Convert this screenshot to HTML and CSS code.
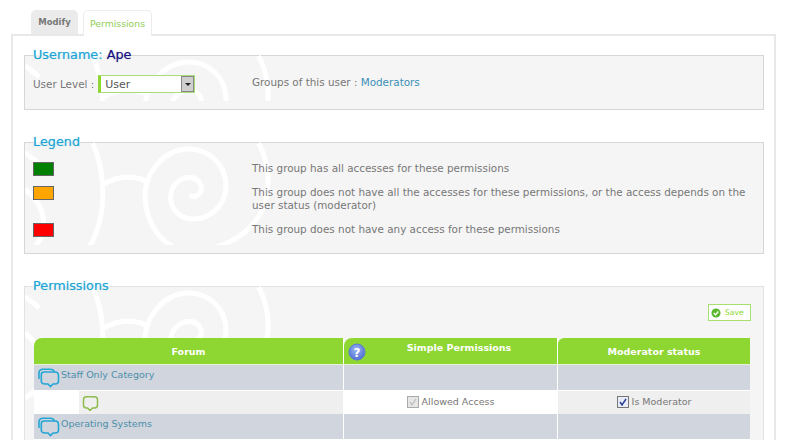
FILE: index.html
```html
<!DOCTYPE html>
<html lang="en">
<head>
<meta charset="utf-8">
<title>Permissions</title>
<link rel="stylesheet" href="styles.css">
</head>
<body>
<svg class="defs" width="0" height="0">
  <defs>
    <g id="swirl" fill="none" stroke="#fff" stroke-width="15" transform="scale(.3333) translate(-72 -36)">
      <path d="M772 42C800 90 815 170 785 240C745 325 650 368 565 365C490 362 435 290 432 205C430 130 490 62 560 60C625 58 675 110 675 170C675 230 625 272 575 270C525 268 500 225 512 185C524 150 570 130 595 160C612 185 590 210 565 200"/>
      <path d="M275 42C305 110 315 200 295 280C285 320 270 350 250 375"/>
      <path d="M310 165C350 140 395 140 435 155"/>
      <path d="M72 180C115 215 135 260 125 310C118 340 100 360 72 375"/>
      <path d="M72 70L115 105"/>
    </g>
    <g id="bubble" fill="none" stroke="currentColor" stroke-width="1.500">
      <path d="M4 .8H12C14 .8 15 1.800 15 3.800V9C15 11 14 12 12 12H10L7.500 14.500L5 12H4C2 12 1 11 1 9V3.800C1 1.800 2 .8 4 .8Z"/>
    </g>
    <g id="bubbles" fill="none" stroke="#23a7d6" stroke-width="1.600">
      <path d="M2 11V5C2 2.600 3.500 1.200 6 1.200H13C15.500 1.200 17 2.300 17.300 4"/>
      <path d="M7 4H18C20.500 4 21.500 5.300 21.500 7.500V13C21.500 15 20.300 16 18 16H16L13.500 18.500L11 16H8C5.500 16 4.300 15 4.300 13V6.500C4.300 5 5.200 4 7 4Z"/>
    </g>
  </defs>
</svg>
<div class="page">
  <nav class="tabs">
    <a class="tab tab-off">Modify</a>
    <a class="tab tab-on">Permissions</a>
  </nav>
  <main class="panel">
    <fieldset class="box box-user">
      <legend>Username: <span class="name">Ape</span></legend>
      <svg class="deco" width="740" height="300"><use href="#swirl"/></svg>
      <div class="two-col user-row">
        <div class="col-left level">
          <span>User Level :</span>
          <span class="select"><span class="select-text">User</span><span class="select-btn"><span class="caret"></span></span></span>
        </div>
        <div class="col-right">Groups of this user : <a class="link">Moderators</a></div>
      </div>
    </fieldset>

    <fieldset class="box box-legend">
      <legend>Legend</legend>
      <svg class="deco" width="740" height="300"><use href="#swirl"/></svg>
      <div class="two-col row-a">
        <div class="col-left"><span class="swatch green"></span></div>
        <div class="col-right">This group has all accesses for these permissions</div>
      </div>
      <div class="two-col row-b">
        <div class="col-left"><span class="swatch orange"></span></div>
        <div class="col-right">This group does not have all the accesses for these permissions, or the access depends on the user status (moderator)</div>
      </div>
      <div class="two-col row-c">
        <div class="col-left"><span class="swatch red"></span></div>
        <div class="col-right">This group does not have any access for these permissions</div>
      </div>
    </fieldset>

    <fieldset class="box box-perm">
      <legend>Permissions</legend>
      <svg class="deco" width="740" height="300"><use href="#swirl"/></svg>
      <div class="actions">
        <a class="save">
          <svg width="10" height="10" viewBox="0 0 11 11"><circle cx="5.500" cy="5.500" r="5" fill="#5cb82e"/><path d="M3 5.600L5 7.500L8 3.800" fill="none" stroke="#fff" stroke-width="1.500"/></svg>
          <span>Save</span>
        </a>
      </div>
      <table class="grid">
        <colgroup><col class="c1"><col class="c2"><col class="c3"></colgroup>
        <thead>
          <tr>
            <th>Forum</th>
            <th class="th-simple">
              <svg class="help" width="18" height="18" viewBox="0 0 18 18"><defs><radialGradient id="hg" cx=".45" cy=".35" r=".75"><stop offset="0" stop-color="#9bb4f2"/><stop offset="1" stop-color="#4565cc"/></radialGradient></defs><circle cx="9" cy="9" r="8" fill="url(#hg)" stroke="#5b7bd6"/><text x="9" y="13.500" text-anchor="middle" class="help-q">?</text></svg>
              <span>Simple Permissions</span>
            </th>
            <th>Moderator status</th>
          </tr>
        </thead>
        <tbody>
          <tr class="cat">
            <td><span class="cat-cell"><svg width="23" height="20" viewBox="0 0 23 20"><use href="#bubbles"/></svg><a class="cat-link">Staff Only Category</a></span></td>
            <td></td><td></td>
          </tr>
          <tr class="forum">
            <td class="f-name"><div class="f-inner"><svg class="f-icon" width="17" height="15" viewBox="0 0 16 15"><use href="#bubble"/></svg></div></td>
            <td class="f-mid"><label class="chk"><svg width="12" height="12" viewBox="0 0 12 12"><rect x=".5" y=".5" width="11" height="11" fill="#e6e6e6" stroke="#aaa"/><path d="M3 6L5 9L9 3" fill="none" stroke="#bbb" stroke-width="1.200"/></svg>Allowed Access</label></td>
            <td class="f-end"><label class="chk"><svg width="12" height="12" viewBox="0 0 12 12"><rect x=".5" y=".5" width="11" height="11" fill="#e8ecf6" stroke="#777"/><path d="M3 6L5 9L9 3" fill="none" stroke="#2a3f9a" stroke-width="1.500"/></svg>Is Moderator</label></td>
          </tr>
          <tr class="cat">
            <td><span class="cat-cell"><svg width="23" height="20" viewBox="0 0 23 20"><use href="#bubbles"/></svg><a class="cat-link">Operating Systems</a></span></td>
            <td></td><td></td>
          </tr>
        </tbody>
      </table>
    </fieldset>
  </main>
</div>
</body>
</html>
```
FILE: styles.css
```css
html, body {
  margin: 0;
  height: 440px;
  overflow: hidden;
  background: #fff;
}
body {
  font-family: "DejaVu Sans", Verdana, sans-serif;
  font-size: 10.4px;
  color: #777;
}
.defs { position: absolute; }
.page { padding: 10px 0 0 11px; width: 765px; }

.tabs { display: flex; gap: 5px; padding-left: 20px; height: 24px; position: relative; z-index: 1; }
.tab {
  display: flex;
  align-items: center;
  justify-content: center;
  border-radius: 5px 5px 0 0;
  box-sizing: border-box;
  flex: none;
}
.tab-off { width: 47px; height: 24px; background: #ebebeb; color: #777; font-size: 8.500px; font-weight: bold; }
.tab-on {
  width: 69px;
  height: 26px;
  background: #fff;
  color: #8fce55;
  border: 1px solid #ececec;
  border-bottom: 0;
  font-size: 9.300px;
}

.panel {
  border: 2px solid #e8e8e8;
  border-bottom: 0;
  padding: 0 10px 0 11px;
  height: 406px;
  box-sizing: border-box;
  overflow: hidden;
}

.box {
  position: relative;
  margin: 0;
  padding: 0;
  border: 1px solid #d6d6d6;
  background: #f5f5f5;
  min-width: 0;
}
.box legend {
  position: relative;
  z-index: 1;
  margin-left: 8px;
  padding: 0;
  font-size: 12.800px;
  line-height: 14px;
  color: #1da5d6;
  text-shadow: 0 0 1px rgba(29, 165, 214, .5);
}
.name { color: #16127f; text-shadow: 0 0 1px rgba(22, 18, 127, .5); }
.deco { position: absolute; left: 0; top: -8px; width: 100%; height: 100%; }

.box-user { margin-top: 12px; height: 60px; }
.box-legend { margin-top: 25px; height: 117px; }
.box-perm { margin-top: 25px; height: 175px; border-color: #e2e2e2; }

.two-col { position: relative; display: flex; }
.col-left { width: 219px; margin-left: 8px; flex: none; }
.col-right { flex: 1; line-height: 13px; padding-right: 14px; }
.link { color: #3a8fb5; }

.user-row { padding-top: 13px; }
.user-row .col-right { padding-top: 1px; }
.level { display: flex; align-items: center; gap: 4px; height: 18px; }

.select {
  display: flex;
  width: 97px;
  height: 18px;
  box-sizing: border-box;
  border: 1px solid #a9dc74;
  border-left: 3px solid #8ed631;
  background: #fff;
  color: #555;
}
.select-text { flex: 1; padding: 2px 0 0 4px; font-size: 11px; }
.select-btn {
  width: 13px;
  background: #cfcfcf;
  border: 1px solid #888;
  box-sizing: border-box;
  display: flex;
  align-items: center;
  justify-content: center;
}
.caret { border: 3px solid transparent; border-top: 3px solid #222; border-bottom: 0; }

.swatch { display: block; box-sizing: border-box; width: 21px; height: 14px; border: 1px solid #666; }
.green { background: #008000; }
.orange { background: #ffa500; }
.red { background: #ff0000; }
.row-a { padding-top: 13px; }
.row-b { padding-top: 10px; }
.row-c { padding-top: 11px; }

.actions { position: relative; display: flex; justify-content: flex-end; padding: 11px 12px 0 0; height: 27px; }
.save {
  display: flex;
  align-items: center;
  gap: 4px;
  box-sizing: border-box;
  width: 43px;
  height: 17px;
  padding-left: 2px;
  border: 1px solid #a8e070;
  background: #fff;
  font-size: 7.600px;
  color: #8ed631;
}

.grid {
  position: relative;
  table-layout: fixed;
  width: 716px;
  margin: 7px 0 0 9px;
  border-collapse: separate;
  border-spacing: 0;
}
.c1 { width: 310px; }
.c2 { width: 214px; }
.c3 { width: 192px; }
.grid th {
  height: 26px;
  padding: 0;
  background: #8ed631;
  color: #fff;
  font-size: 9.500px;
  border-right: 1px solid #fff;
  border-bottom: 1px solid #e6f2d6;
  border-radius: 8px 0 0 0;
}
.grid th:last-child { border-right: 0; border-radius: 6px 0 0 0; }
.th-simple { position: relative; vertical-align: top; }
.th-simple span { display: block; padding: 3px 0 0 17px; line-height: 13px; }
.help { position: absolute; left: 4px; top: 5px; }
.help-q { fill: #fff; font-size: 12px; font-weight: bold; font-family: "DejaVu Sans", sans-serif; }

.grid td { padding: 0; border-right: 1px solid #fff; font-size: 9.500px; }
.grid td:last-child { border-right: 0; }
.cat td { height: 25px; background: #d1d5dd; border-bottom: 1px solid #fff; vertical-align: top; }
.cat-cell { display: flex; align-items: flex-start; gap: 1px; padding: 3px 0 0 3px; }
.cat-cell svg { flex: none; }
.cat-link { color: #4c8fab; line-height: 13px; }

.forum td { height: 23px; background: #fff; text-align: center; }
.f-inner { margin-left: 45px; height: 23px; background: #efefef; display: flex; align-items: center; padding-left: 3px; }
.f-icon { color: #8dbb4c; margin-top: 2px; }
.forum .f-name { background: #fff; }
.forum .f-end { background: #efefef; }
.chk { display: inline-flex; align-items: center; gap: 3px; color: #777; }
```
